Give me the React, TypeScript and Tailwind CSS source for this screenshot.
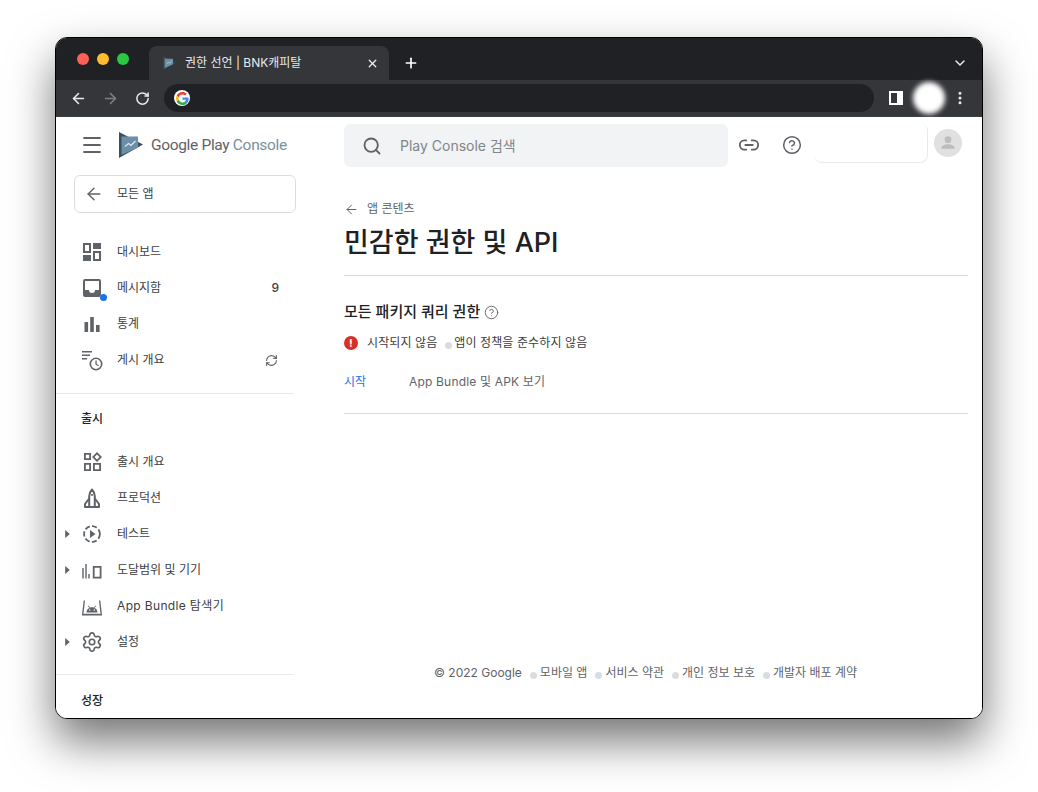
import React from "react";
import { ArrowLeft, ArrowRight, RotateCw, X, Plus, ChevronDown, Menu, Search, Link2, CircleHelp, EllipsisVertical, Settings, RefreshCw } from "lucide-react";

const FONT = "font-['Inter','Noto_Sans_CJK_KR',sans-serif]";

const Svg = ({ children, className = "" }: { children: React.ReactNode; className?: string }) => (
  <svg viewBox="0 0 24 24" width="24" height="24" fill="#5f6368" className={className}>
    {children}
  </svg>
);

const DashboardIcon = () => (
  <Svg>
    <path fillRule="evenodd" d="M3 3h8v10H3V3zm2 2v6h4V5H5zM13 3h8v6h-8V3zM3 15h8v6H3v-6zM13 11h8v10h-8V11zm2 2v6h4v-6h-4z" />
  </Svg>
);
const InboxIcon = () => (
  <span className="relative block w-6 h-6">
    <Svg>
      <path fillRule="evenodd" d="M5 3h14a2 2 0 0 1 2 2v14a2 2 0 0 1-2 2H5a2 2 0 0 1-2-2V5a2 2 0 0 1 2-2zm0 2v9h4a3 3 0 0 0 6 0h4V5H5z" />
    </Svg>
    <span className="absolute right-[-3px] bottom-[-1px] w-[7px] h-[7px] rounded-full bg-[#1a73e8]" />
  </span>
);
const BarsIcon = () => (
  <Svg>
    <path d="M4.500 10h3.600v10H4.500zM10.200 5h3.600v15h-3.600zM16 13h3.600v7H16z" />
  </Svg>
);
const ScheduleIcon = () => (
  <Svg>
    <path d="M2 3h10v1.600H2zM2 6.500h8v1.600H2zM2 10h5v1.600H2z" />
    <path fillRule="evenodd" d="M16 9.500a6.500 6.500 0 1 1 0 13 6.500 6.500 0 0 1 0-13zm0 1.600a4.900 4.900 0 1 0 0 9.800 4.900 4.900 0 0 0 0-9.800z" />
    <path d="M15.400 12.600h1.300v3.300l2.200 1.300-.6 1-2.900-1.700z" />
  </Svg>
);
const ReleaseIcon = () => (
  <Svg>
    <path fillRule="evenodd" d="M4 3h7v7H4V3zm1.800 1.800v3.400h3.400V4.800zM4 13h7v8H4v-8zm1.800 1.800v4.400h3.400v-4.400zM17 2l5 5-5 5-5-5 5-5zm0 2.500L14.500 7l2.500 2.500L19.500 7 17 4.500zM13 13h8v8h-8v-8zm1.800 1.800v4.400h4.400v-4.400z" />
  </Svg>
);
const RocketIcon = () => (
  <svg viewBox="0 0 24 24" width="24" height="24" fill="none" stroke="#5f6368" strokeWidth="2">
    <path d="M12 3.500c-1.900 2-2.800 4.400-2.800 6.800v2.200L5 18v3h14v-3l-4.200-5.500v-2.200c0-2.400-.9-4.800-2.800-6.800z" strokeLinejoin="round" />
    <path d="M9.200 12.500V21M14.800 12.500V21" />
    <path d="M11.100 8h1.800v1.800h-1.800z" fill="#5f6368" stroke="none" />
  </svg>
);
const TestIcon = () => (
  <svg viewBox="0 0 24 24" width="24" height="24" fill="none">
    <circle cx="12" cy="12" r="7.900" stroke="#5f6368" strokeWidth="1.800" strokeDasharray="5.100 2.300" />
    <path d="M10 8l5.500 4-5.500 4z" fill="#5f6368" />
  </svg>
);
const ReachIcon = () => (
  <Svg>
    <path fillRule="evenodd" d="M2.300 10h1.400v10.500H2.300zM5.300 6h1.400v14.500H5.300zM8.300 16h1.400v4.500H8.300zM12.800 8h8.700V20.500h-8.700V8zm1.800 1.800v8.900h5.100V9.800z" />
  </Svg>
);
const BundleIcon = () => (
  <Svg>
    <path d="M2 19.800h20v1.800H2z" />
    <path d="M3.700 6.500H5L3.500 19.800H2.100zM19 6.500h1.300l1.600 13.300h-1.400z" />
    <path d="M6.500 18.500c0-3 2.400-5.300 5.500-5.300s5.500 2.300 5.500 5.300h-11zM8 12l.6-.4 1.500 2.200-.6.400zM16 12l-.6-.4-1.500 2.200.6.400z" />
    <circle cx="9.700" cy="16" r=".8" fill="#fff" />
    <circle cx="14.300" cy="16" r=".8" fill="#fff" />
  </Svg>
);
const Caret = () => (
  <svg viewBox="0 0 4 7" width="5" height="8" fill="#5f6368">
    <path d="M0 0l4 3.500-4 3.500z" />
  </svg>
);

const GoogleG = () => (
  <span className="flex items-center justify-center w-4 h-4 rounded-full bg-white">
    <svg viewBox="0 0 48 48" width="13" height="13">
      <path fill="#EA4335" d="M24 9.500c3.500 0 6.700 1.200 9.200 3.600l6.900-6.900C35.900 2.400 30.500 0 24 0 14.600 0 6.500 5.400 2.600 13.200l8 6.200C12.500 13.600 17.800 9.500 24 9.500z" />
      <path fill="#4285F4" d="M46.500 24.500c0-1.600-.1-3.100-.4-4.500H24v9h12.700c-.5 2.900-2.200 5.400-4.700 7l7.700 6c4.500-4.200 6.800-10.300 6.800-17.500z" />
      <path fill="#FBBC05" d="M10.500 28.600c-.5-1.400-.8-3-.8-4.600s.3-3.200.8-4.600l-8-6.200C.9 16.500 0 20.100 0 24s.9 7.500 2.600 10.800l7.900-6.200z" />
      <path fill="#34A853" d="M24 48c6.500 0 11.900-2.100 15.900-5.800l-7.700-6c-2.200 1.400-4.900 2.300-8.200 2.300-6.200 0-11.500-4.200-13.400-9.800l-8 6.200C6.500 42.600 14.600 48 24 48z" />
    </svg>
  </span>
);

const PlayLogo = ({ size }: { size: number }) => (
  <svg viewBox="0 0 26 28" width={size} height={(size * 28) / 26}>
    <path d="M1 1l24 12.500L1 27z" fill="#37515f" />
    <path d="M3.500 5.500h16.500v11L3.500 24z" fill="#6c8ea6" />
    <path d="M7 15.500l3.500-3 2.500 1.800 4.500-4.300" stroke="#dce6ec" strokeWidth="1.300" fill="none" />
  </svg>
);

const NavItem = ({
  icon,
  label,
  caret,
  right,
  wide,
}: {
  icon: React.ReactNode;
  label: string;
  caret?: boolean;
  right?: React.ReactNode;
  wide?: boolean;
}) => (
  <div className="relative flex items-center h-9 pl-[24px] pr-[16px] text-xs text-[#3c4043]">
    {caret && (
      <span className="absolute left-[9px] top-[14px]">
        <Caret />
      </span>
    )}
    <span className="flex w-6 h-6 mr-[13px] shrink-0">{icon}</span>
    <span className={wide ? "flex-1 tracking-[0.35px]" : "flex-1"}>{label}</span>
    {right}
  </div>
);

const Dot = () => <span className="inline-block w-[7px] h-[7px] rounded-full bg-[#dadce0] translate-y-[2px]" />;

export default function App() {
  return (
    <div className={`h-[792px] w-[1038px] bg-white pt-[37px] pl-[55px] overflow-hidden ${FONT}`}>
      <div className="flex flex-col w-[928px] h-[682px] rounded-[12px] border border-black overflow-hidden bg-white shadow-[0_22px_45px_rgba(0,0,0,0.55)]">
        {/* tab strip */}
        <div className="flex items-end h-[42px] bg-[#202124] shrink-0">
          <div className="flex gap-[8px] pl-[21px] pr-[20px] self-start pt-[15px]">
            <span className="w-3 h-3 rounded-full bg-[#ff5f57]" />
            <span className="w-3 h-3 rounded-full bg-[#febc2e]" />
            <span className="w-3 h-3 rounded-full bg-[#28c840]" />
          </div>
          <div className="flex items-center w-[240px] h-[34px] rounded-t-[8px] bg-[#35363a] pl-[14px] pr-[10px]">
            <PlayLogo size={13} />
            <span className="ml-[9px] flex-1 text-xs text-[#e8eaed]">권한 선언 | BNK캐피탈</span>
            <X size={13} strokeWidth={2.5} className="text-[#e8eaed]" />
          </div>
          <div className="flex items-center h-[34px] pl-[14px]">
            <Plus size={16} strokeWidth={2.5} className="text-white" />
          </div>
          <div className="flex items-center h-[34px] ml-auto pr-[14px]">
            <ChevronDown size={16} strokeWidth={2.2} className="text-[#e8eaed]" />
          </div>
        </div>
        {/* toolbar */}
        <div className="flex items-center h-[37px] bg-[#35363a] shrink-0 pl-[14px] pr-[14px] border-b border-[#3c4043]">
          <ArrowLeft size={17} strokeWidth={2.2} className="text-[#e8eaed]" />
          <ArrowRight size={17} strokeWidth={2.2} className="text-[#7f8083] ml-[15px]" />
          <RotateCw size={15} strokeWidth={2.4} className="text-[#e8eaed] ml-[16px]" />
          <div className="flex items-center flex-1 h-[28px] ml-[14px] rounded-full bg-[#202124] pl-[10px]">
            <GoogleG />
          </div>
          <span className="ml-[15px] flex w-[14px] h-[14px] bg-white p-[2px] pr-[6px]">
            <span className="block flex-1 bg-[#35363a]" />
          </span>
          <span className="ml-[10px] w-[32px] h-[32px] rounded-full bg-white blur-[2.5px]" />
          <EllipsisVertical size={16} strokeWidth={2.5} className="text-[#e8eaed] ml-[7px]" />
        </div>
        {/* page */}
        <div className="flex flex-1 min-h-0 bg-white">
          <aside className="w-[238px] shrink-0">
            <div className="flex items-center h-[56px] pl-[24px]">
              <Menu size={24} strokeWidth={1.8} className="text-[#5f6368]" />
              <span className="ml-[14px]">
                <PlayLogo size={26} />
              </span>
              <span className="ml-[7px] mt-[1px] font-['Roboto',sans-serif] text-[15.5px] tracking-[-0.33px] text-[#5f6368] whitespace-nowrap">
                Google Play <span className="text-[#78909c]">Console</span>
              </span>
            </div>
            <div className="flex items-center w-[222px] h-[38px] ml-[18px] mt-[2px] rounded-[6px] border border-[#dadce0] pl-[9px] text-xs text-[#3c4043]">
              <ArrowLeft size={20} strokeWidth={1.7} className="text-[#5f6368]" />
              <span className="ml-[13px]">모든 앱</span>
            </div>
            <div className="mt-[21px]">
              <NavItem icon={<DashboardIcon />} label="대시보드" />
              <NavItem icon={<InboxIcon />} label="메시지함" right={<span className="font-medium mr-[-1px]">9</span>} />
              <NavItem icon={<BarsIcon />} label="통계" />
              <NavItem
                icon={<ScheduleIcon />}
                label="게시 개요"
                right={<RefreshCw size={13} strokeWidth={2} className="text-[#5f6368]" />}
              />
            </div>
            <div className="mt-[15px] border-t border-[#e8eaed]" />
            <div className="mt-[17px] pl-[25px] text-xs font-medium text-[#202124] leading-[16px]">출시</div>
            <div className="mt-[17px]">
              <NavItem icon={<ReleaseIcon />} label="출시 개요" />
              <NavItem icon={<RocketIcon />} label="프로덕션" />
              <NavItem caret icon={<TestIcon />} label="테스트" />
              <NavItem caret icon={<ReachIcon />} label="도달범위 및 기기" />
              <NavItem wide icon={<BundleIcon />} label="App Bundle 탐색기" />
              <NavItem caret icon={<Settings size={22} strokeWidth={1.8} className="text-[#5f6368] m-[1px]" />} label="설정" />
            </div>
            <div className="mt-[14px] border-t border-[#e8eaed]" />
            <div className="mt-[18px] pl-[25px] text-xs font-medium text-[#202124] leading-[16px]">성장</div>
          </aside>
          <main className="flex flex-col flex-1 min-w-0 pl-[50px] pr-[14px]">
            <div className="flex items-center h-[43px] mt-[7px] shrink-0">
              <div className="flex items-center shrink-0 w-[384px] h-[43px] rounded-[6px] bg-[#f1f3f4] pl-[18px]">
                <Search size={20} strokeWidth={2.2} className="text-[#5f6368]" />
                <span className="ml-[18px] text-sm text-[#80868b]">Play Console 검색</span>
              </div>
              <Link2 size={22} strokeWidth={2} className="text-[#5f6368] ml-[10px] -mt-[2px]" />
              <CircleHelp size={20} strokeWidth={1.8} className="text-[#5f6368] ml-[22px] -mt-[2px]" />
              <div className="ml-[12px] shrink-0 w-[114px] h-[40px] -mt-[5px] rounded-[8px] border-r border-b border-[#e8eaed]" />
              <span className="flex items-center justify-center shrink-0 ml-[6px] -mt-[5px] w-[28px] h-[28px] rounded-full bg-[#e0e0e0] overflow-hidden">
                <svg viewBox="0 0 24 24" width="20" height="20" fill="#bdbdbd">
                  <circle cx="12" cy="8" r="4" />
                  <path d="M4 18c0-3 5-4.500 8-4.500s8 1.500 8 4.500v1H4z" />
                </svg>
              </span>
            </div>
            <div className="flex items-center mt-[34px] text-xs leading-[16px] text-[#5f6368]">
              <ArrowLeft size={15} strokeWidth={1.6} />
              <span className="ml-[8px]">앱 콘텐츠</span>
            </div>
            <h1 className="mt-[8px] text-[27px] leading-[36px] font-medium text-[#202124]">민감한 권한 및 API</h1>
            <div className="mt-[14px] border-t border-[#dadce0]" />
            <div className="flex items-center mt-[26px] h-[20px]">
              <span className="text-[15px] font-medium text-[#202124]">모든 패키지 쿼리 권한</span>
              <CircleHelp size={15} strokeWidth={1.5} className="ml-[4px] text-[#5f6368]" />
            </div>
            <div className="flex items-center mt-[11px] h-[20px] text-xs text-[#3c4043] tracking-[0.1px]">
              <span className="flex items-center justify-center w-[14px] h-[14px] rounded-full bg-[#d93025] text-white text-[11px] font-bold leading-none">
                !
              </span>
              <span className="ml-[9px]">시작되지 않음</span>
              <span className="ml-[8px] mr-[2px]">
                <Dot />
              </span>
              <span>앱이 정책을 준수하지 않음</span>
            </div>
            <div className="flex items-center mt-[19px] h-[20px] text-xs">
              <span className="w-[65px] text-[#1a73e8]">시작</span>
              <span className="text-[#5f6368] tracking-[0.18px]">App Bundle 및 APK 보기</span>
            </div>
            <div className="mt-[21px] border-t border-[#dadce0]" />
            <div className="mt-auto mb-[37px] ml-[90px] flex items-center gap-[8px] text-xs text-[#5f6368]">
              <span>© 2022 Google</span>
              <span className="flex items-center gap-[3px]">
                <Dot />
                모바일 앱
              </span>
              <span className="flex items-center gap-[3px]">
                <Dot />
                서비스 약관
              </span>
              <span className="flex items-center gap-[3px]">
                <Dot />
                개인 정보 보호
              </span>
              <span className="flex items-center gap-[3px]">
                <Dot />
                개발자 배포 계약
              </span>
            </div>
          </main>
        </div>
      </div>
    </div>
  );
}
